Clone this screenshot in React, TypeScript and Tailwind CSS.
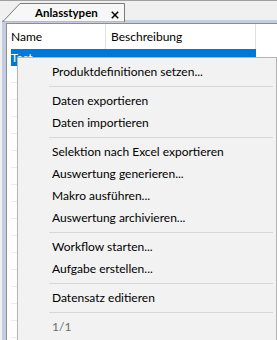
import React from "react";

type Item = { label: string; disabled?: boolean } | "sep";

const items: Item[] = [
  { label: "Produktdefinitionen setzen..." },
  "sep",
  { label: "Daten exportieren" },
  { label: "Daten importieren" },
  "sep",
  { label: "Selektion nach Excel exportieren" },
  { label: "Auswertung generieren..." },
  { label: "Makro ausführen..." },
  { label: "Auswertung archivieren..." },
  "sep",
  { label: "Workflow starten..." },
  { label: "Aufgabe erstellen..." },
  "sep",
  { label: "Datensatz editieren" },
  "sep",
  { label: "1/1", disabled: true },
];

export default function App() {
  return (
    <div className="relative w-[277px] h-[340px] overflow-hidden bg-[#f0f0f0] text-[12px] text-black font-['Lato',sans-serif]">
      {/* tab strip */}
      <div className="h-[20px] border-t border-[#a0a0a0] relative">
        <div className="absolute left-[2px] top-[2px] w-[123px] h-[19px]">
          <svg width="123" height="19" className="absolute inset-0">
            <polygon points="0.5,19 18,0.5 122.5,0.5 122.5,19" fill="#f7f7f7" stroke="#7a7a7a" />
          </svg>
          <span className="absolute left-[33px] top-[2px] font-bold text-[11.5px] leading-[16px]">Anlasstypen</span>
          <svg width="8" height="8" viewBox="0 0 8 8" className="absolute left-[109px] top-[8px]">
            <path d="M0.8 0.8 L7.2 7.2 M7.2 0.8 L0.8 7.2" stroke="#000" strokeWidth="1.5" />
          </svg>
        </div>
      </div>

      {/* panel */}
      <div className="ml-[2px] h-[320px] border-t-[3px] border-l-[4px] border-[#c5cde3]">
        <div className="h-full border-t border-l border-[#8c8c8c] bg-white pl-[4px]">
          <div className="flex h-[25px] items-center">
            <div className="w-[95px] h-full flex items-center border-r border-[#e0e0e0]">Name</div>
            <div className="w-[150px] h-full flex items-center pl-[5px] border-r border-[#e0e0e0]">Beschreibung</div>
          </div>
          <div className="flex h-[17px] w-[245px] items-center bg-[#0078d7] text-white">Test</div>
          {Array.from({ length: 16 }).map((_, i) => (
            <div key={i} className="h-[17px] w-[245px] border-b border-[#ececec]" />
          ))}
        </div>
      </div>

      {/* context menu */}
      <div className="absolute left-[17px] top-[57px] w-[260px] h-[284px] bg-[#f2f2f2] border border-[#b4b4b4] shadow-[2px_2px_3px_rgba(0,0,0,0.15)] py-[3px]">
        {items.map((it, i) =>
          it === "sep" ? (
            <div key={i} className="h-[7px] flex items-center pl-[31px] pr-[3px]">
              <div className="h-px w-full bg-[#d7d7d7]" />
            </div>
          ) : (
            <div
              key={i}
              className={`h-[22px] flex items-center pl-[34px] ${it.disabled ? "text-[#6d6d6d]" : ""}`}
            >
              {it.label}
            </div>
          )
        )}
      </div>
    </div>
  );
}
